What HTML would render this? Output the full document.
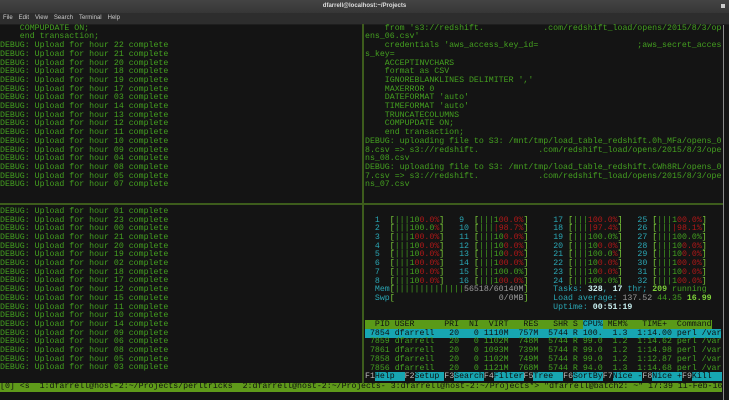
<!DOCTYPE html>
<html><head><meta charset="utf-8"><style>
html,body{margin:0;padding:0;}
body{width:729px;height:400px;overflow:hidden;background:#141414;position:relative;font-family:"Liberation Mono",monospace;}
#title{position:absolute;left:0;top:0;width:729px;height:13px;background:linear-gradient(#444,#363636);color:#ddd;font:bold 6px "Liberation Sans",sans-serif;text-align:center;line-height:13px;}
#close{position:absolute;right:4px;top:4px;width:4px;height:4px;background:#ccc;}
#menu{position:absolute;left:0;top:13px;width:729px;height:11px;background:#2d2d2d;color:#ccc;font:6px "Liberation Sans",sans-serif;line-height:11px;border-bottom:1px solid #1e1e1e;}
#menu span{margin-left:3px;margin-right:3px;}
pre{position:absolute;margin:0;font-family:"Liberation Mono",monospace;font-size:8.25px;line-height:8.7px;color:#44a020;white-space:pre;}
.vl{position:absolute;left:362px;top:24px;width:1.5px;height:359px;background:#3d5c1c;}
.hl{position:absolute;left:0;top:203px;width:723px;height:1.5px;background:#3d5c1c;}
.sb{position:absolute;left:723px;top:25px;width:1px;height:375px;background:#8a8a8a;}
.n{color:#2aa6b4}.b{color:#7ed23a}.g{color:#44a020}.r{color:#b01818}.w{color:#9a9a9a}
.bw{color:#c8f0f0;font-weight:bold}.bg{color:#7ed23a;font-weight:bold}
.hd{background:#5a9a18;color:#101010}.cy{background:#17a6b2;color:#101010}
.fk{color:#bbb}
#status{position:absolute;left:0;top:382.7px;width:722px;height:9px;background:#5f9a1a;}
</style></head><body>
<div id="title">dfarrell@localhost:~/Projects<div id="close"></div></div>
<div id="menu"><span>File</span><span>Edit</span><span>View</span><span>Search</span><span>Terminal</span><span>Help</span></div>

<pre style="left:0;top:24.7px">    COMPUPDATE ON;
    end transaction;
DEBUG: Upload for hour 22 complete
DEBUG: Upload for hour 21 complete
DEBUG: Upload for hour 20 complete
DEBUG: Upload for hour 18 complete
DEBUG: Upload for hour 19 complete
DEBUG: Upload for hour 17 complete
DEBUG: Upload for hour 03 complete
DEBUG: Upload for hour 14 complete
DEBUG: Upload for hour 13 complete
DEBUG: Upload for hour 12 complete
DEBUG: Upload for hour 11 complete
DEBUG: Upload for hour 10 complete
DEBUG: Upload for hour 09 complete
DEBUG: Upload for hour 04 complete
DEBUG: Upload for hour 08 complete
DEBUG: Upload for hour 05 complete
DEBUG: Upload for hour 07 complete</pre>

<pre style="left:365px;top:24.7px">    from 's3://redshift.            .com/redshift_load/opens/2015/8/3/op
ens_06.csv'
    credentials 'aws_access_key_id=                    ;aws_secret_acces
s_key=
    ACCEPTINVCHARS
    format as CSV
    IGNOREBLANKLINES DELIMITER ','
    MAXERROR 0
    DATEFORMAT 'auto'
    TIMEFORMAT 'auto'
    TRUNCATECOLUMNS
    COMPUPDATE ON;
    end transaction;
DEBUG: uploading file to S3: /mnt/tmp/load_table_redshift.0h_MFa/opens_0
8.csv => s3://redshift.            .com/redshift_load/opens/2015/8/3/ope
ns_08.csv
DEBUG: uploading file to S3: /mnt/tmp/load_table_redshift.CWh8RL/opens_0
7.csv => s3://redshift.            .com/redshift_load/opens/2015/8/3/ope
ns_07.csv</pre>

<pre style="left:0;top:207.8px">DEBUG: Upload for hour 01 complete
DEBUG: Upload for hour 23 complete
DEBUG: Upload for hour 00 complete
DEBUG: Upload for hour 21 complete
DEBUG: Upload for hour 20 complete
DEBUG: Upload for hour 19 complete
DEBUG: Upload for hour 02 complete
DEBUG: Upload for hour 18 complete
DEBUG: Upload for hour 17 complete
DEBUG: Upload for hour 12 complete
DEBUG: Upload for hour 15 complete
DEBUG: Upload for hour 11 complete
DEBUG: Upload for hour 10 complete
DEBUG: Upload for hour 14 complete
DEBUG: Upload for hour 09 complete
DEBUG: Upload for hour 06 complete
DEBUG: Upload for hour 08 complete
DEBUG: Upload for hour 05 complete
DEBUG: Upload for hour 03 complete</pre>

<pre style="left:365px;top:216.6px;color:#44a020">  <span class="n">1</span>  <span class="b">[</span>|||10<span class="r">0.0%</span><span class="b">]</span>   <span class="n">9</span>  <span class="b">[</span>|||1<span class="r">00.0%</span><span class="b">]</span>     <span class="n">17</span> <span class="b">[</span>|||<span class="r">100.0%</span><span class="b">]</span>   <span class="n">25</span> <span class="b">[</span>|||1<span class="r">00.0%</span><span class="b">]</span>
  <span class="n">2</span>  <span class="b">[</span>|||100.0<span class="r">%</span><span class="b">]</span>   <span class="n">10</span> <span class="b">[</span>|||<span class="r">|98.7%</span><span class="b">]</span>     <span class="n">18</span> <span class="b">[</span>|||<span class="r">|97.4%</span><span class="b">]</span>   <span class="n">26</span> <span class="b">[</span>|||<span class="r">|98.1%</span><span class="b">]</span>
  <span class="n">3</span>  <span class="b">[</span>|||1<span class="r">00.0%</span><span class="b">]</span>   <span class="n">11</span> <span class="b">[</span>|||10<span class="r">0.0%</span><span class="b">]</span>     <span class="n">19</span> <span class="b">[</span>|||100.0%<span class="b">]</span>   <span class="n">27</span> <span class="b">[</span>|||100.0%<span class="b">]</span>
  <span class="n">4</span>  <span class="b">[</span>|||10<span class="r">0.0%</span><span class="b">]</span>   <span class="n">12</span> <span class="b">[</span>|||10<span class="r">0.0%</span><span class="b">]</span>     <span class="n">20</span> <span class="b">[</span>|||10<span class="r">0.0%</span><span class="b">]</span>   <span class="n">28</span> <span class="b">[</span>|||10<span class="r">0.0%</span><span class="b">]</span>
  <span class="n">5</span>  <span class="b">[</span>|||10<span class="r">0.0%</span><span class="b">]</span>   <span class="n">13</span> <span class="b">[</span>|||10<span class="r">0.0%</span><span class="b">]</span>     <span class="n">21</span> <span class="b">[</span>|||100.0<span class="r">%</span><span class="b">]</span>   <span class="n">29</span> <span class="b">[</span>|||10<span class="r">0.0%</span><span class="b">]</span>
  <span class="n">6</span>  <span class="b">[</span>|||1<span class="r">00.0%</span><span class="b">]</span>   <span class="n">14</span> <span class="b">[</span>|||1<span class="r">00.0%</span><span class="b">]</span>     <span class="n">22</span> <span class="b">[</span>|||10<span class="r">0.0%</span><span class="b">]</span>   <span class="n">30</span> <span class="b">[</span>|||1<span class="r">00.0%</span><span class="b">]</span>
  <span class="n">7</span>  <span class="b">[</span>|||10<span class="r">0.0%</span><span class="b">]</span>   <span class="n">15</span> <span class="b">[</span>|||100.0%<span class="b">]</span>     <span class="n">23</span> <span class="b">[</span>|||10<span class="r">0.0%</span><span class="b">]</span>   <span class="n">31</span> <span class="b">[</span>|||10<span class="r">0.0%</span><span class="b">]</span>
  <span class="n">8</span>  <span class="b">[</span>|||10<span class="r">0.0%</span><span class="b">]</span>   <span class="n">16</span> <span class="b">[</span>|||1<span class="r">00.0%</span><span class="b">]</span>     <span class="n">24</span> <span class="b">[</span>|||100.0%<span class="b">]</span>   <span class="n">32</span> <span class="b">[</span>|||1<span class="r">00.0%</span><span class="b">]</span>
  <span class="n">Mem</span><span class="b">[</span>||||||||||||||<span class="w">56518/60140M</span><span class="b">]</span>     <span class="n">Tasks: </span><span class="bw">328</span><span class="n">, </span><span class="bw">17</span><span class="n"> thr; </span><span class="bg">209</span> running
  <span class="n">Swp</span><span class="b">[</span>                     <span class="w">0/0MB</span><span class="b">]</span>     <span class="n">Load average: </span><span class="w">137.52</span> 44.35 <span class="bg">16.99</span>
                                      <span class="n">Uptime: </span><span class="bw">00:51:19</span>

<span class="hd">  PID USER      PRI  NI  VIRT   RES   SHR S </span><span class="cy">CPU%</span><span class="hd"> MEM%   TIME+  Command</span>
<span class="cy"> 7854 dfarrell   20   0 1110M  757M  5744 R 100.  1.3  1:14.00 perl /var</span>
 7859 dfarrell   20   0 1102M  748M  5744 R 99.0  1.2  1:14.62 perl /var
 7861 dfarrell   20   0 1093M  739M  5744 R 99.0  1.2  1:14.98 perl /var
 7858 dfarrell   20   0 1102M  749M  5744 R 99.0  1.2  1:12.87 perl /var
 7856 dfarrell   20   0 1121M  768M  5744 R 94.0  1.3  1:14.68 perl /var
<span class="fk">F1</span><span class="cy">Help  </span><span class="fk">F2</span><span class="cy">Setup </span><span class="fk">F3</span><span class="cy">Search</span><span class="fk">F4</span><span class="cy">Filter</span><span class="fk">F5</span><span class="cy">Tree  </span><span class="fk">F6</span><span class="cy">SortBy</span><span class="fk">F7</span><span class="cy">Nice -</span><span class="fk">F8</span><span class="cy">Nice +</span><span class="fk">F9</span><span class="cy">Kill  </span></pre>

<div id="status"></div>
<pre style="left:0;top:382.9px;color:#101010">[0] &lt;s  1:dfarrell@host-2:~/Projects/perltricks  2:dfarrell@host-2:~/Proj</pre>
<pre style="left:361px;top:382.9px;color:#101010">ects- 3:dfarrell@host-2:~/Projects*&gt; "dfarrell@batch2: ~" 17:39 11-Feb-16</pre>

<div class="vl"></div><div class="hl"></div><div class="sb"></div>
</body></html>
